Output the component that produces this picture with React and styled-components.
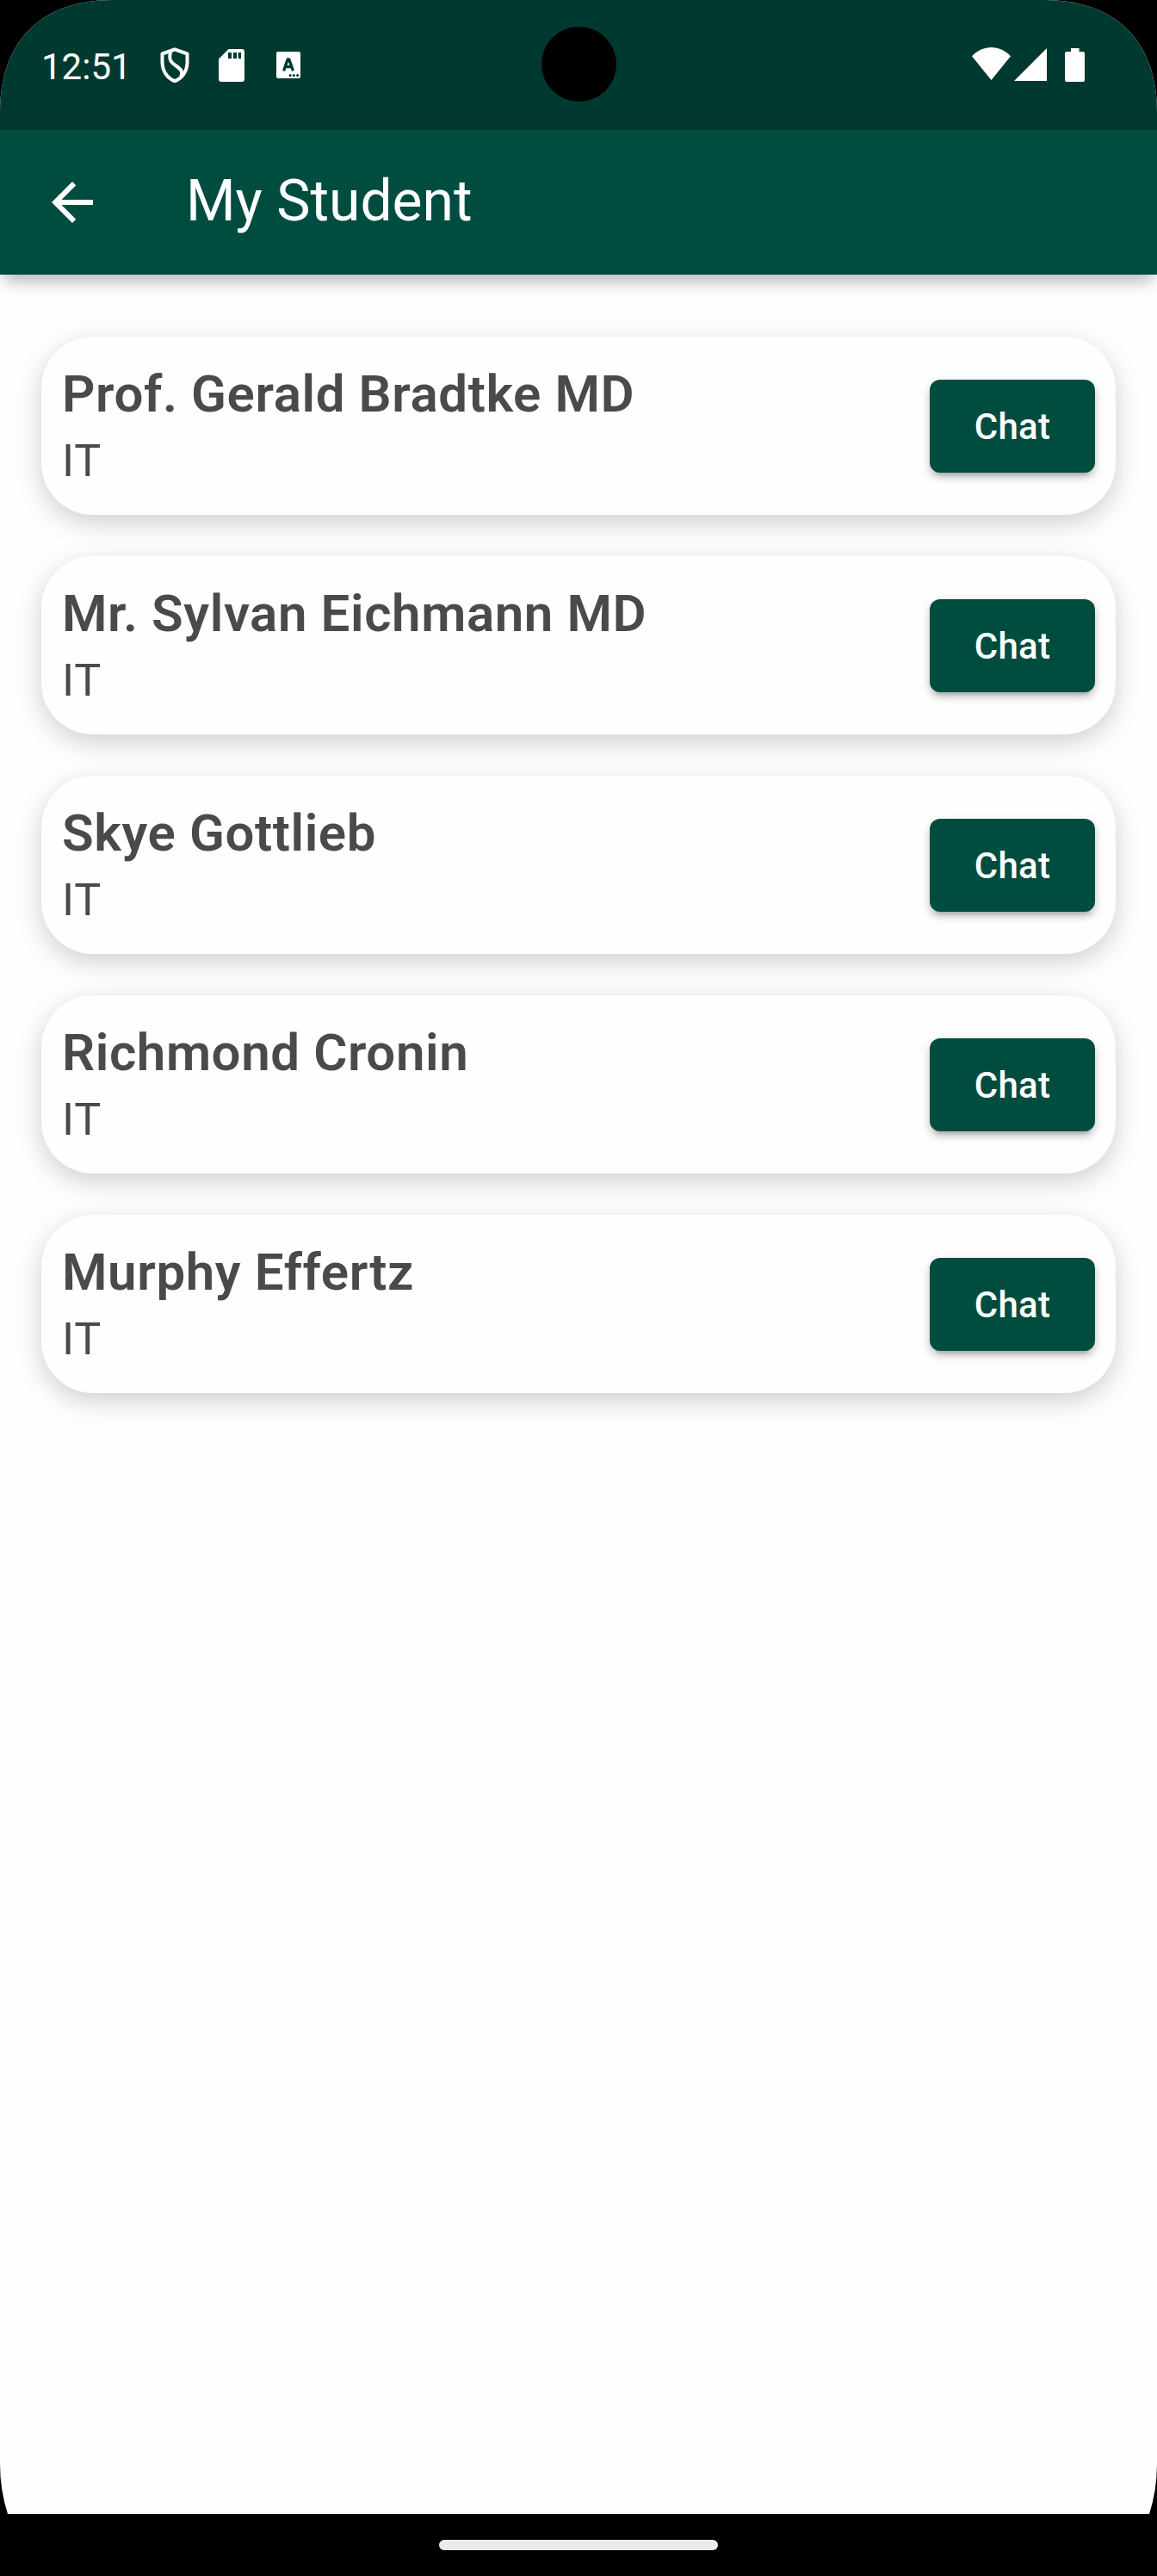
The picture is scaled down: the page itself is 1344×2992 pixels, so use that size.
import React from "react";
import styled, { createGlobalStyle } from "styled-components";

const GlobalStyle = createGlobalStyle`
  *, *::before, *::after { box-sizing: border-box; }
  body {
    margin: 0;
    background: #000;
    font-family: Roboto, "Liberation Sans", sans-serif;
  }
`;

const Device = styled.div`
  width: 1344px;
  height: 2992px;
  display: flex;
  flex-direction: column;
  overflow: hidden;
  background: #000;
`;

const Screen = styled.div`
  flex: 1;
  display: flex;
  flex-direction: column;
  overflow: hidden;
  background: #fefefe;
  clip-path: path("M0 130 C0 48 48 0 130 0 H1214 C1296 0 1344 48 1344 130 V2862 Q1344 2892 1335 2920 H9 Q0 2892 0 2862 Z");
`;

const StatusBar = styled.header`
  position: relative;
  flex: none;
  height: 151px;
  display: flex;
  align-items: center;
  justify-content: space-between;
  padding: 0 84px 0 48px;
  background: #003930;
  color: #fff;
`;

const StatusGroup = styled.div`
  display: flex;
  align-items: center;
`;

const Clock = styled.span`
  width: 122px;
  font-size: 42px;
  line-height: 50px;
  padding-top: 4px;
`;

const Glyph = styled.svg`
  display: block;
  flex: none;
  width: ${(p) => p.$w}px;
  height: ${(p) => p.$h}px;
  margin-left: ${(p) => p.$gap || 0}px;
  margin-bottom: ${(p) => p.$lift || 0}px;
`;

const Camera = styled.div`
  position: absolute;
  left: 629px;
  top: 31px;
  width: 87px;
  height: 87px;
  border-radius: 50%;
  background: #000;
`;

const AppBar = styled.div`
  position: relative;
  flex: none;
  height: 168px;
  display: flex;
  align-items: center;
  padding: 0 48px;
  background: #004d40;
  color: #fff;
  box-shadow: 0 14px 16px -6px rgba(0, 0, 0, 0.2), 0 4px 24px 0 rgba(0, 0, 0, 0.1);
`;

const BackButton = styled.button`
  display: block;
  width: 72px;
  height: 72px;
  padding: 0;
  border: 0;
  background: none;
`;

const Title = styled.h1`
  margin: 0 0 3px 96px;
  font-size: 66px;
  font-weight: 400;
  line-height: 80px;
`;

const StudentList = styled.main`
  display: flex;
  flex-direction: column;
  gap: 48px;
  padding: 72px 48px;
`;

const Card = styled.article`
  height: 207px;
  display: flex;
  align-items: center;
  justify-content: space-between;
  padding: 0 24px;
  border-radius: 60px;
  background: #fefefe;
  box-shadow: 0 9px 30px rgba(0, 0, 0, 0.19);
`;

const Info = styled.div`
  display: flex;
  flex-direction: column;
  padding-bottom: 3px;
  color: #4a4a4a;
`;

const Name = styled.h2`
  margin: 0;
  font-size: 60px;
  font-weight: 600;
  line-height: 84px;
  letter-spacing: 0.6px;
`;

const Subject = styled.p`
  margin: 0;
  font-size: 52px;
  line-height: 71px;
  letter-spacing: 0.75px;
`;

const ChatButton = styled.button`
  width: 192px;
  height: 108px;
  padding: 2px 0 0;
  border: 0;
  border-radius: 12px;
  background: #004d40;
  color: #fff;
  font-family: inherit;
  font-size: 42px;
  font-weight: 500;
  letter-spacing: 0.3px;
  box-shadow: 0 9px 3px -6px rgba(0, 0, 0, 0.12), 0 6px 8px 0 rgba(0, 0, 0, 0.18),
    0 3px 15px 0 rgba(0, 0, 0, 0.08);
`;

const NavBar = styled.footer`
  flex: none;
  height: 72px;
  display: flex;
  align-items: center;
  justify-content: center;
  background: #000;
`;

const Handle = styled.div`
  width: 324px;
  height: 12px;
  border-radius: 6px;
  background: #ebebeb;
`;

const students = [
  { name: "Prof. Gerald Bradtke MD", subject: "IT" },
  { name: "Mr. Sylvan Eichmann MD", subject: "IT" },
  { name: "Skye Gottlieb", subject: "IT" },
  { name: "Richmond Cronin", subject: "IT" },
  { name: "Murphy Effertz", subject: "IT" },
];

const ShieldIcon = () => (
  <Glyph $w={34} $h={42} $gap={16} viewBox="0 0 34 42" fill="none" stroke="#fff" strokeWidth="4">
    <path d="M17 2.3 L31.5 7.5 V17 C31.5 27 26 36 17 39.2 C8 36 2.5 27 2.5 17 V7.5 Z" strokeLinejoin="round" />
    <path d="M12.5 4.5 C9 14 13 18 18.5 21.5 C25 26 26 28 24.5 34" />
  </Glyph>
);

const SdCardIcon = () => (
  <Glyph $w={30} $h={38} $gap={34} viewBox="0 0 30 38">
    <path
      fill="#fff"
      fillRule="evenodd"
      d="M11.5 0 H27 A3 3 0 0 1 30 3 V35 A3 3 0 0 1 27 38 H3 A3 3 0 0 1 0 35 V11.5 Z M11 4 V11 H15 V4 Z M17 4 V11 H21 V4 Z M22.7 4 V11 H26 V4 Z"
    />
  </Glyph>
);

const KeyboardIcon = () => (
  <Glyph $w={28} $h={31} $gap={37} viewBox="0 0 28 31">
    <rect width="28" height="31" rx="2" fill="#fff" />
    <path d="M9 21 L13.2 9 H14.8 L19 21 M10.5 17.5 H17.5" fill="none" stroke="#003930" strokeWidth="3.4" strokeLinecap="round" strokeLinejoin="round" />
    <circle cx="16.2" cy="27.4" r="1.5" fill="#003930" />
    <circle cx="20.4" cy="27.4" r="1.5" fill="#003930" />
    <circle cx="24.6" cy="27.4" r="1.5" fill="#003930" />
  </Glyph>
);

const WifiIcon = () => (
  <Glyph $w={45} $h={38} $lift={3} viewBox="0 0 45 38">
    <path fill="#fff" d="M0 10.3 C13 -3.4 32 -3.4 45 10.3 L22.5 38 Z" />
  </Glyph>
);

const SignalIcon = () => (
  <Glyph $w={38} $h={38} $gap={4} $lift={1} viewBox="0 0 38 38">
    <path fill="#fff" d="M38 0 V38 H0 Z" />
  </Glyph>
);

const BatteryIcon = () => (
  <Glyph $w={23} $h={39} $gap={21} viewBox="0 0 23 39">
    <path fill="#fff" d="M7 0 H16.6 V4 H21 A2 2 0 0 1 23 6 V37 A2 2 0 0 1 21 39 H2 A2 2 0 0 1 0 37 V6 A2 2 0 0 1 2 4 H7 Z" />
  </Glyph>
);

export default function App() {
  return (
    <>
      <GlobalStyle />
      <Device>
        <Screen>
          <StatusBar>
            <StatusGroup>
              <Clock>12:51</Clock>
              <ShieldIcon />
              <SdCardIcon />
              <KeyboardIcon />
            </StatusGroup>
            <Camera />
            <StatusGroup>
              <WifiIcon />
              <SignalIcon />
              <BatteryIcon />
            </StatusGroup>
          </StatusBar>
          <AppBar>
            <BackButton aria-label="Back">
              <Glyph $w={72} $h={72} viewBox="0 0 24 24">
                <path fill="#fff" d="M20 11H7.83l5.59-5.59L12 4l-8 8 8 8 1.41-1.41L7.83 13H20v-2z" />
              </Glyph>
            </BackButton>
            <Title>My Student</Title>
          </AppBar>
          <StudentList>
            {students.map((s) => (
              <Card key={s.name}>
                <Info>
                  <Name>{s.name}</Name>
                  <Subject>{s.subject}</Subject>
                </Info>
                <ChatButton>Chat</ChatButton>
              </Card>
            ))}
          </StudentList>
        </Screen>
        <NavBar>
          <Handle />
        </NavBar>
      </Device>
    </>
  );
}
